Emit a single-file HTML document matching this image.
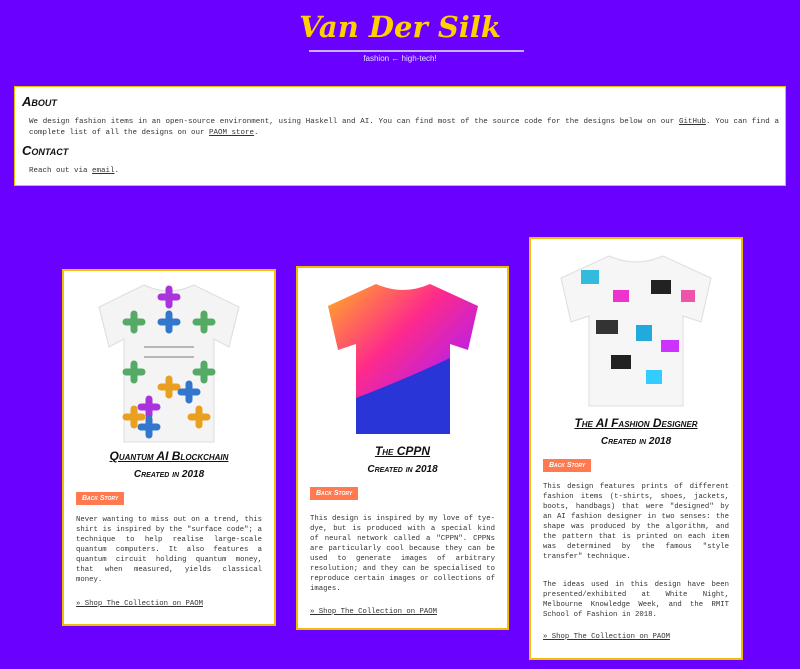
<!DOCTYPE html>
<html><head><meta charset="utf-8"><style>
body{margin:0;background:#6a00ff;width:800px;height:669px;overflow:hidden;position:relative;font-family:"Liberation Mono",monospace;}
.title{position:absolute;left:0;width:800px;top:10px;text-align:center;color:#ffd000;font:italic bold 29px "DejaVu Serif","Liberation Serif",serif;letter-spacing:0px}
.rule{position:absolute;left:309px;width:215px;top:50px;height:2px;background:#c8b0ff}
.tag{position:absolute;left:0;width:800px;top:54px;text-align:center;color:#e8e0ff;font:8px "Liberation Sans",sans-serif}
.box{position:absolute;left:14px;top:86px;width:772px;height:100px;background:#fff;border:1px solid #f0c000;box-sizing:border-box}
h2{margin:0;position:absolute;left:7px;font:italic bold 13px "Liberation Sans",sans-serif;font-variant:small-caps;color:#111}
.p{position:absolute;left:14px;right:6px;font-size:7.5px;line-height:11px;color:#333;text-align:justify}
a{color:#333;text-decoration:underline}
.card{position:absolute;background:#fff;border:2px solid #f0c000;box-sizing:border-box}
.card h3{margin:0;text-align:center;font:italic bold 12px "Liberation Sans",sans-serif;font-variant:small-caps;text-decoration:underline;color:#111}
.card h4{margin:6px 0 0;text-align:center;font:italic bold 10px "Liberation Sans",sans-serif;font-variant:small-caps;color:#111}
.bs{display:inline-block;background:#ff7a50;color:#fff;font:italic bold 7px "Liberation Sans",sans-serif;font-variant:small-caps;padding:3px 6px;margin:12px 0 0 12px}
.ct{margin:10px 12px 0;font-size:7.3px;line-height:10px;color:#333;text-align:justify}
.shop{margin:10px 12px 0;font-size:7.3px;color:#333;text-decoration:underline}
svg{display:block;margin:0 auto}
</style></head><body>
<div class="title">Van Der Silk</div>
<div class="rule"></div>
<div class="tag">fashion ← high-tech!</div>
<div class="box">
<h2 style="top:7px">About</h2>
<div class="p" style="top:30px">We design fashion items in an open-source environment, using Haskell and AI. You can find most of the source code for the designs below on our <a>GitHub</a>. You can find a complete list of all the designs on our <a>PAOM store</a>.</div>
<h2 style="top:56px">Contact</h2>
<div class="p" style="top:79px">Reach out via <a>email</a>.</div>
</div>

<div class="card" style="left:62px;top:269px;width:214px;height:357px">
<svg width="160" height="170" viewBox="0 0 160 170" style="margin-top:6px"><path d="M55 8 Q80 20 105 8 L150 30 L140 70 L125 62 L125 165 L35 165 L35 62 L20 70 L10 30Z" fill="#f4f4f4" stroke="#ddd"/>
<g stroke-width="7" stroke-linecap="round" fill="none">
<path d="M45 37v16M37 45h16M115 37v16M107 45h16M45 87v16M37 95h16M115 87v16M107 95h16" stroke="#5a6"/>
<path d="M80 12v16M72 20h16M60 122v16M52 130h16" stroke="#a3d"/>
<path d="M45 132v16M37 140h16M110 132v16M102 140h16M80 102v16M72 110h16" stroke="#e9a020"/>
<path d="M80 37v16M72 45h16M60 142v16M52 150h16M100 107v16M92 115h16" stroke="#37c"/></g>
<path d="M55 70h50M55 80h50" stroke="#555" stroke-width=".7"/></svg>
<h3 style="margin-top:2px">Quantum AI Blockchain</h3><h4>Created in 2018</h4>
<span class="bs">Back Story</span>
<div class="ct">Never wanting to miss out on a trend, this shirt is inspired by the "surface code"; a technique to help realise large-scale quantum computers. It also features a quantum circuit holding quantum money, that when measured, yields classical money.</div>
<div class="shop" style="margin-top:15px">» Shop The Collection on PAOM</div>
</div>

<div class="card" style="left:296px;top:266px;width:213px;height:364px">
<svg width="170" height="160" viewBox="0 0 170 160" style="margin-top:10px"><defs><linearGradient id="g" x1="0" y1="0" x2="1" y2="1"><stop offset="0" stop-color="#ffb020"/><stop offset=".4" stop-color="#ff2a8a"/><stop offset=".7" stop-color="#c020e0"/><stop offset="1" stop-color="#2030d0"/></linearGradient></defs><path d="M58 6 Q85 18 112 6 L160 28 L150 72 L132 66 L132 156 L38 156 L38 66 L20 72 L10 28Z" fill="url(#g)"/><path d="M38 120 Q90 100 132 80 L132 156 L38 156Z" fill="#2a35d8"/></svg>
<h3 style="margin-top:6px">The CPPN</h3><h4>Created in 2018</h4>
<span class="bs">Back Story</span>
<div class="ct" style="margin-top:14px">This design is inspired by my love of tye-dye, but is produced with a special kind of neural network called a "CPPN". CPPNs are particularly cool because they can be used to generate images of arbitrary resolution; and they can be specialised to reproduce certain images or collections of images.</div>
<div class="shop" style="margin-top:14px">» Shop The Collection on PAOM</div>
</div>

<div class="card" style="left:529px;top:237px;width:214px;height:423px">
<svg width="170" height="160" viewBox="0 0 170 160" style="margin-top:11px"><path d="M58 6 Q85 18 112 6 L160 28 L150 72 L132 66 L132 156 L38 156 L38 66 L20 72 L10 28Z" fill="#f6f6f6" stroke="#ddd"/>
<g><rect x="30" y="20" width="18" height="14" fill="#3bd"/><rect x="62" y="40" width="16" height="12" fill="#e3c"/><rect x="100" y="30" width="20" height="14" fill="#222"/><rect x="45" y="70" width="22" height="14" fill="#333"/><rect x="85" y="75" width="16" height="16" fill="#2ad"/><rect x="110" y="90" width="18" height="12" fill="#c3f"/><rect x="60" y="105" width="20" height="14" fill="#222"/><rect x="95" y="120" width="16" height="14" fill="#3cf"/><rect x="130" y="40" width="14" height="12" fill="#e5a"/></g></svg>
<h3 style="margin-top:6px">The AI Fashion Designer</h3><h4>Created in 2018</h4>
<span class="bs">Back Story</span>
<div class="ct">This design features prints of different fashion items (t-shirts, shoes, jackets, boots, handbags) that were "designed" by an AI fashion designer in two senses: the shape was produced by the algorithm, and the pattern that is printed on each item was determined by the famous "style transfer" technique.</div>
<div class="ct" style="margin-top:18px">The ideas used in this design have been presented/exhibited at White Night, Melbourne Knowledge Week, and the RMIT School of Fashion in 2018.</div>
<div class="shop" style="margin-top:13px">» Shop The Collection on PAOM</div>
</div>
</body></html>
